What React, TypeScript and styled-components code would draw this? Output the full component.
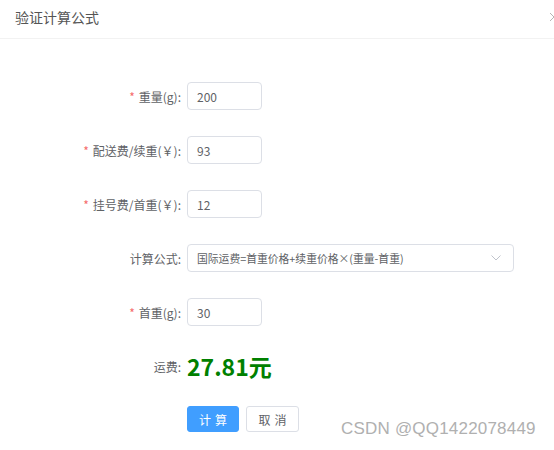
import React from "react";
import styled, { createGlobalStyle } from "styled-components";

const GlobalStyle = createGlobalStyle`
  html, body { margin: 0; padding: 0; background: #fff; }
  body { font-family: "Noto Sans CJK SC", "Liberation Sans", sans-serif; }
  * { box-sizing: border-box; }
`;

const Dialog = styled.div`
  position: relative;
  width: 554px;
  height: 450px;
  background: #fff;
  overflow: hidden;
`;

const Header = styled.div`
  height: 39px;
  display: flex;
  align-items: center;
  padding: 0 15px 4px;
  border-bottom: 1px solid #f2f2f2;
`;

const Title = styled.div`
  font-size: 14px;
  color: #555;
`;

const Close = styled.svg`
  position: absolute;
  top: 12px;
  left: 549px;
`;

const Form = styled.div`
  display: flex;
  flex-direction: column;
  gap: 26px;
  padding-top: 43px;
`;

const Row = styled.div`
  display: flex;
  align-items: center;
  min-height: 28px;
`;

const Label = styled.label`
  width: 181px;
  margin-right: 6px;
  text-align: right;
  font-size: 12px;
  color: #606266;
  white-space: nowrap;
`;

const Star = styled.span`
  color: #f56c6c;
  margin-right: 4px;
`;

const Input = styled.div<{ $w: number; $small?: boolean }>`
  width: ${(p) => p.$w}px;
  height: 28px;
  border: 1px solid #dcdfe6;
  border-radius: 4px;
  display: flex;
  align-items: center;
  justify-content: space-between;
  padding: 0 12px 0 9px;
  font-size: ${(p) => (p.$small ? "10.8px" : "12px")};
  color: #606266;
`;

const Result = styled.span`
  font-size: 23px;
  font-weight: 700;
  color: #008000;
  line-height: 28px;
`;

const Buttons = styled.div`
  display: flex;
  gap: 7px;
  padding-left: 187px;
`;

const Button = styled.button<{ $primary?: boolean }>`
  height: 26px;
  width: ${(p) => (p.$primary ? 52 : 53)}px;
  border-radius: 3px;
  font-family: inherit;
  font-size: 12px;
  letter-spacing: 4px;
  text-indent: 4px;
  padding: 0;
  border: 1px solid ${(p) => (p.$primary ? "#409eff" : "#dcdfe6")};
  background: ${(p) => (p.$primary ? "#409eff" : "#fff")};
  color: ${(p) => (p.$primary ? "#fff" : "#606266")};
`;

const Watermark = styled.div`
  position: absolute;
  left: 341px;
  top: 419px;
  font-family: "Liberation Sans", sans-serif;
  font-size: 17px;
  color: #b0b0b0;
  letter-spacing: 0.2px;
`;

const Chevron = () => (
  <svg width="10" height="6" viewBox="0 0 10 6">
    <path d="M0.5 0.5 L5 5 L9.5 0.5" fill="none" stroke="#c0c4cc" strokeWidth="1" />
  </svg>
);

const fields = [
  { label: "重量(g):", value: "200", req: true },
  { label: "配送费/续重(￥):", value: "93", req: true },
  { label: "挂号费/首重(￥):", value: "12", req: true },
];

export default function App() {
  return (
    <>
      <GlobalStyle />
      <Dialog>
        <Header>
          <Title>验证计算公式</Title>
        </Header>
        <Close width="10" height="10" viewBox="0 0 10 10">
          <path d="M1 1 L9 9 M9 1 L1 9" stroke="#b5b5b5" strokeWidth="1" />
        </Close>
        <Form>
          {fields.map((f) => (
            <Row key={f.label}>
              <Label>
                {f.req && <Star>*</Star>}
                {f.label}
              </Label>
              <Input $w={75}>{f.value}</Input>
            </Row>
          ))}
          <Row>
            <Label>计算公式:</Label>
            <Input $w={327} $small>
              <span>国际运费=首重价格+续重价格×(重量-首重)</span>
              <Chevron />
            </Input>
          </Row>
          <Row>
            <Label>
              <Star>*</Star>首重(g):
            </Label>
            <Input $w={75}>30</Input>
          </Row>
          <Row>
            <Label>运费:</Label>
            <Result>27.81元</Result>
          </Row>
          <Buttons>
            <Button $primary>计算</Button>
            <Button>取消</Button>
          </Buttons>
        </Form>
        <Watermark>CSDN @QQ1422078449</Watermark>
      </Dialog>
    </>
  );
}
